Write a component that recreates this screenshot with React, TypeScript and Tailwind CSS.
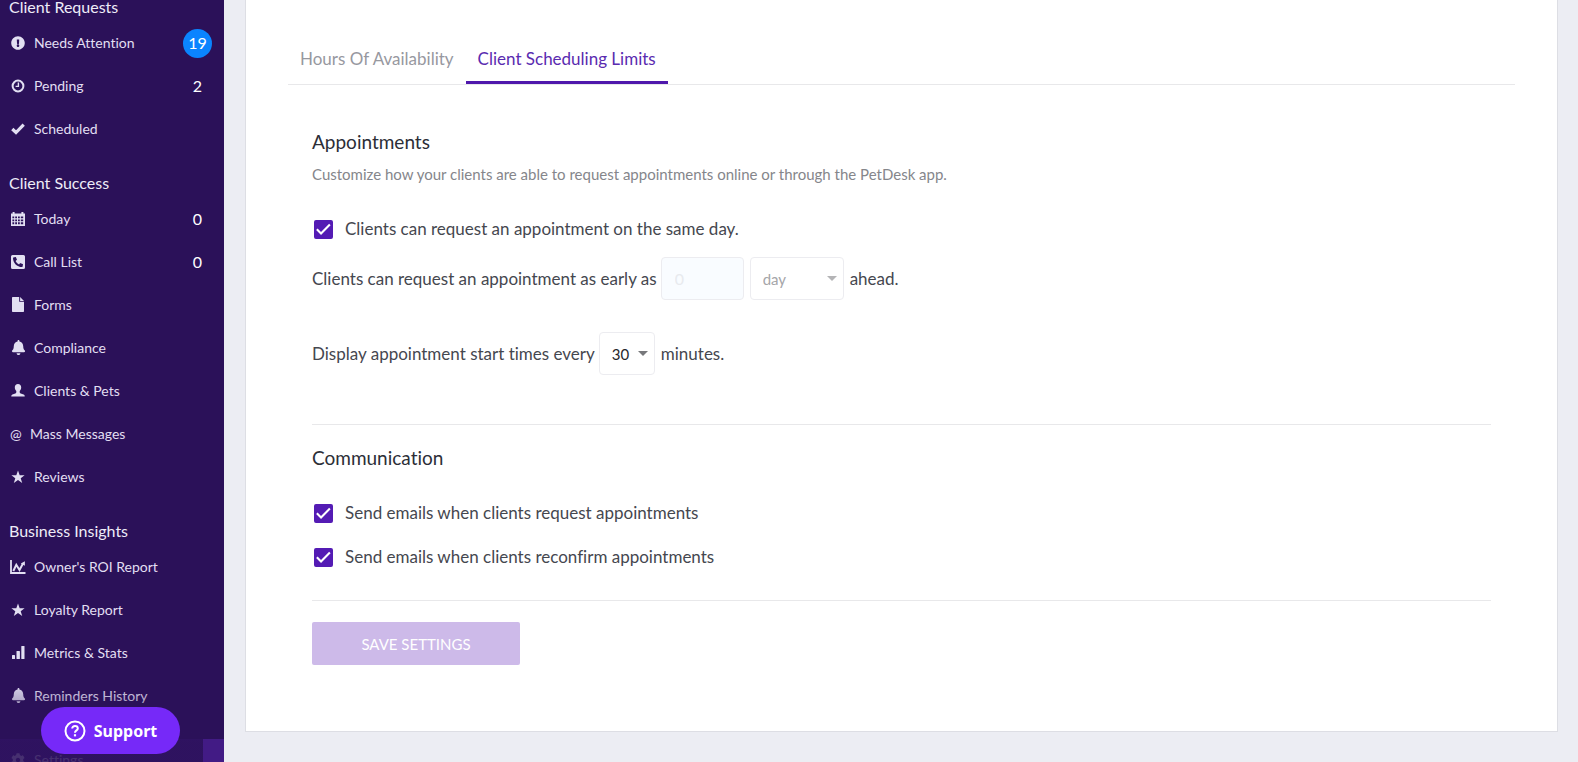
import { useState } from "react";
import type { ReactNode } from "react";
import { FaBell, FaCog, FaExclamationCircle, FaPhoneSquareAlt } from "react-icons/fa";

const ClockIcon = () => (
  <svg viewBox="0 0 14 14" className="size-[14px]" fill="none" stroke="currentColor">
    <circle cx="7" cy="7" r="5.4" strokeWidth="2" />
    <path d="M7.4 3.6v3.8H4.6" strokeWidth="1.4" />
  </svg>
);

const CheckIcon = () => (
  <svg viewBox="0 0 14 12" className="h-3 w-[14px]" fill="none" stroke="currentColor">
    <path d="M1.3 6 5 9.500 12.700 1.600" strokeWidth="3.200" />
  </svg>
);

const CalendarIcon = () => (
  <svg viewBox="0 0 16 16" className="size-4" fill="currentColor">
    <path
      fillRule="evenodd"
      d="M1 2.5h1.600V1h2v1.500h6.800V1h2v1.500H15V15H1V2.500zm1.400 3v1.800h1.800V5.500H2.400zm2.800 0v1.800H7V5.500H5.200zm2.800 0v1.800h1.800V5.500H8zm2.800 0v1.800h2.400V5.500h-2.400zM2.400 8.400v1.800h1.800V8.400H2.400zm2.800 0v1.800H7V8.400H5.200zm2.800 0v1.800h1.800V8.400H8zm2.800 0v1.800h2.400V8.400h-2.400zm-8.400 2.900v2h1.800v-2H2.400zm2.800 0v2H7v-2H5.200zm2.800 0v2h1.800v-2H8zm2.800 0v2h2.400v-2h-2.400z"
    />
  </svg>
);

const FileIcon = () => (
  <svg viewBox="0 0 12 15" className="h-[15px] w-3" fill="currentColor">
    <path d="M.7 0h6.5v4.8H12v9.5a.7.7 0 0 1-.7.7H.7a.7.7 0 0 1-.7-.7V.7A.7.7 0 0 1 .7 0z" />
    <path d="M8.1 0 12 3.9H8.1z" />
  </svg>
);

const PersonIcon = () => (
  <svg viewBox="0 0 14 13" className="h-[13px] w-[14px]" fill="currentColor">
    <path d="M7 0c2 0 3.200 1.300 3.200 3.300 0 1.700-.7 3-1.500 3.800v1.200c0 .5.400.8 1 1.100l2.900 1.200c.8.400 1.100.8 1.100 1.400v.5H.3V12c0-.6.300-1 1.100-1.400l2.900-1.200c.6-.3 1-.6 1-1.100V7.100C4.500 6.300 3.800 5 3.800 3.300 3.800 1.300 5 0 7 0z" />
  </svg>
);

const StarIcon = () => (
  <svg viewBox="0 0 14 14" className="size-[14px]" fill="currentColor">
    <path d="M7 .5l1.700 4.700h4.900L9.700 8.200l1.500 4.900L7 10.100l-4.200 3 1.500-4.900L.4 5.200h4.900z" />
  </svg>
);

const LineChartIcon = () => (
  <svg viewBox="0 0 16 14" className="h-[14px] w-4" fill="none" stroke="currentColor">
    <path d="M1 0v13h14.500" strokeWidth="1.800" />
    <path d="M3.300 11 6.300 4.800l3.200 5.200L13 3.500" strokeWidth="2" />
    <path d="M10.800 3.500 14.900 1.200v4.600z" fill="currentColor" stroke="none" />
  </svg>
);

const BarsIcon = () => (
  <svg viewBox="0 0 13 13" className="size-[13px]" fill="currentColor">
    <rect x="0" y="9" width="3" height="4" rx=".5" />
    <rect x="4.500" y="5" width="3.400" height="8" rx=".5" />
    <rect x="9.300" y="0" width="3.200" height="13" rx=".5" />
  </svg>
);

type NavItem = { label: string; icon: ReactNode; count?: number; badge?: boolean };

const sections: { title: string; items: NavItem[] }[] = [
  {
    title: "Client Requests",
    items: [
      { label: "Needs Attention", icon: <FaExclamationCircle size={14} />, count: 19, badge: true },
      { label: "Pending", icon: <ClockIcon />, count: 2 },
      { label: "Scheduled", icon: <CheckIcon /> },
    ],
  },
  {
    title: "Client Success",
    items: [
      { label: "Today", icon: <CalendarIcon />, count: 0 },
      { label: "Call List", icon: <FaPhoneSquareAlt size={16} />, count: 0 },
      { label: "Forms", icon: <FileIcon /> },
      { label: "Compliance", icon: <FaBell size={15} /> },
      { label: "Clients & Pets", icon: <PersonIcon /> },
      { label: "Mass Messages", icon: "@" },
      { label: "Reviews", icon: <StarIcon /> },
    ],
  },
  {
    title: "Business Insights",
    items: [
      { label: "Owner's ROI Report", icon: <LineChartIcon /> },
      { label: "Loyalty Report", icon: <StarIcon /> },
      { label: "Metrics & Stats", icon: <BarsIcon /> },
      { label: "Reminders History", icon: <FaBell size={15} /> },
    ],
  },
];

function NavLink({ item }: { item: NavItem }) {
  const isText = typeof item.icon === "string";
  return (
    <a href="#" className="flex h-[43px] items-center pr-3 pb-px pl-[10px] text-sm text-[#e2dff2]">
      <span className={isText ? "w-5" : "flex w-6 items-center pb-px"}>
        {isText ? item.icon : <span className="flex w-4 justify-center">{item.icon}</span>}
      </span>
      <span className="flex-1">{item.label}</span>
      {item.count !== undefined && (
        <span
          className={
            item.badge
              ? "flex size-[29px] items-center justify-center rounded-full bg-[#0a84ff] text-base text-white"
              : "w-[29px] text-center text-base text-white"
          }
        >
          {item.count}
        </span>
      )}
    </a>
  );
}

function Sidebar() {
  return (
    <aside className="sticky top-0 h-screen w-56 shrink-0 overflow-hidden bg-[#2b1159]">
      <nav className="-mt-2 flex flex-col gap-[17px]">
        {sections.map((section) => (
          <div key={section.title}>
            <h2 className="flex h-[30px] items-center pl-[9px] text-base text-[#eeecf8]">{section.title}</h2>
            {section.items.map((item) => (
              <NavLink key={item.label} item={item} />
            ))}
          </div>
        ))}
        <div className="mt-1 bg-[#421b85]">
          <NavLink item={{ label: "Settings", icon: <FaCog size={14} /> }} />
        </div>
      </nav>
      <div className="pointer-events-none absolute bottom-0 left-0 h-20 w-[203px] bg-linear-to-b from-[#2b1159]/0 to-[#2b1159]/85 to-75%" />
      <button className="absolute bottom-2 left-[41px] flex h-[47px] w-[139px] items-center justify-center gap-2 rounded-full bg-[#7629f8] font-['Noto_Sans',sans-serif] text-base font-bold text-white">
        <svg viewBox="0 0 22 22" className="size-[22px]" fill="none" stroke="currentColor">
          <circle cx="11" cy="11" r="9.500" strokeWidth="2" />
          <path d="M8.200 8.600c0-1.600 1.200-2.600 2.800-2.600s2.800 1 2.800 2.400c0 2-2.800 2-2.800 4.300" strokeWidth="2" />
          <path d="M11 14.200v2.200" strokeWidth="2.200" />
        </svg>
        Support
      </button>
    </aside>
  );
}

function Checkbox({ label }: { label: string }) {
  const [checked, setChecked] = useState(true);
  return (
    <label className="flex h-6 items-center gap-3 pl-[2px]">
      <span className="relative flex">
        <input
          type="checkbox"
          checked={checked}
          onChange={(e) => setChecked(e.target.checked)}
          className="peer size-[19px] appearance-none rounded-xs border-2 border-[#541bb4] checked:bg-[#541bb4]"
        />
        <svg
          viewBox="0 0 20 20"
          className="pointer-events-none absolute inset-0 hidden size-[19px] peer-checked:block"
          fill="none"
          stroke="white"
          strokeWidth="2.2"
        >
          <path d="M3 9.800l4.400 4.400 9.300-9.400" />
        </svg>
      </span>
      {label}
    </label>
  );
}

const Caret = () => (
  <svg viewBox="0 0 10 5" className="pointer-events-none absolute top-[19px] right-[7px] h-[5px] w-[10px]" fill="currentColor">
    <path d="M0 0h10L5 5z" />
  </svg>
);

export default function App() {
  return (
    <div className="flex min-h-screen items-start bg-[#ecedf3] font-[Lato,sans-serif] text-[17px] leading-6 text-[#45474f] [font-variant-ligatures:none]">
      <Sidebar />
      <main className="min-w-0 flex-1 pr-5 pb-[30px] pl-[21px]">
        <div className="border border-t-0 border-[#dddee4] bg-white px-[42px] pt-9 pb-[66px]">
          <div className="flex border-b border-[#e8e8ea]">
            <button className="h-12 border-b-3 border-transparent px-3 text-[#97989f]">Hours Of Availability</button>
            <button className="h-12 border-b-3 border-[#4f18ac] px-3 text-[#5a2bb0]">Client Scheduling Limits</button>
          </div>

          <div className="px-6 pt-[43px]">
            <h1 className="text-[19px] leading-7 text-[#2c2e37]">Appointments</h1>
            <p className="mt-[6px] text-[15px] leading-6 text-[#85868b]">
              Customize how your clients are able to request appointments online or through the PetDesk app.
            </p>

            <div className="mt-[31px]">
              <Checkbox label="Clients can request an appointment on the same day." />
            </div>

            <div className="mt-4 flex items-center">
              <label htmlFor="lead">Clients can request an appointment as early as</label>
              <input
                id="lead"
                disabled
                defaultValue="0"
                className="ml-1 h-[43px] w-[83px] rounded-sm border border-[#ececf0] bg-[#f9fcff] px-[13px] text-base text-[#e8eaee]"
              />
              <span className="relative ml-[6px] text-[#b4b4b6]">
                <select
                  aria-label="Unit"
                  disabled
                  className="h-[43px] w-[94px] appearance-none rounded-sm border border-[#ececf0] bg-white px-3 text-[15px] text-[#a5a6a9] opacity-100"
                >
                  <option>day</option>
                </select>
                <Caret />
              </span>
              <span className="ml-[6px]">ahead.</span>
            </div>

            <div className="mt-8 flex items-center">
              <label htmlFor="interval">Display appointment start times every</label>
              <span className="relative ml-1 text-[#77787b]">
                <select
                  id="interval"
                  defaultValue="30"
                  className="h-[43px] w-14 appearance-none rounded-sm border border-[#ececf0] bg-white px-3 text-[15px] text-[#26272b]"
                >
                  <option>15</option>
                  <option>30</option>
                  <option>60</option>
                </select>
                <Caret />
              </span>
              <span className="ml-[6px]">minutes.</span>
            </div>

            <hr className="mt-[49px] border-[#e8e8ea]" />

            <h1 className="mt-[19px] text-[19px] leading-7 text-[#2c2e37]">Communication</h1>
            <div className="mt-[29px] flex flex-col gap-5">
              <Checkbox label="Send emails when clients request appointments" />
              <Checkbox label="Send emails when clients reconfirm appointments" />
            </div>

            <hr className="mt-[31px] border-[#e8e8ea]" />

            <button className="mt-[21px] h-[43px] w-52 rounded-xs bg-[#cdbae9] text-[15px] text-white">SAVE SETTINGS</button>
          </div>
        </div>
      </main>
    </div>
  );
}
